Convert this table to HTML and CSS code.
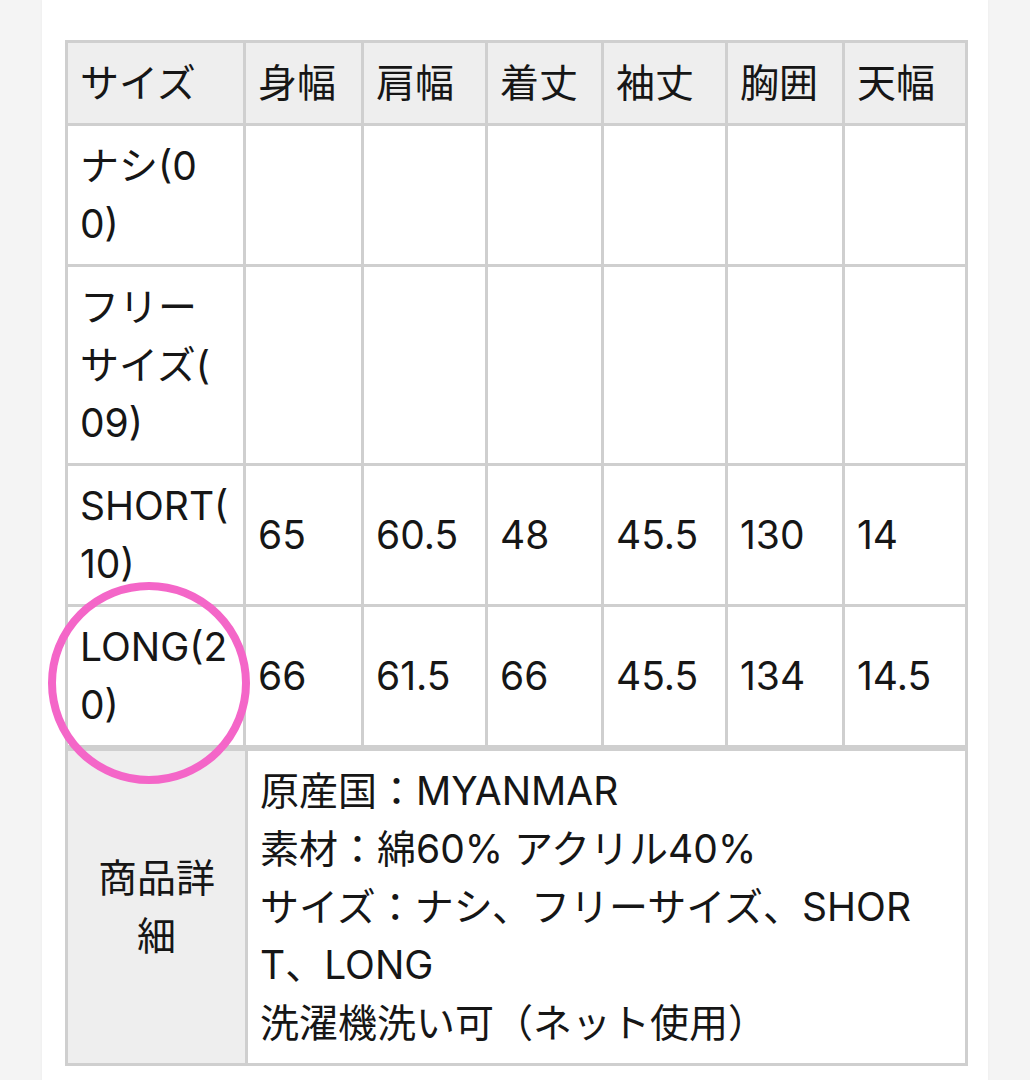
FILE: index.html
```html
<!DOCTYPE html>
<html lang="ja">
<head>
<meta charset="utf-8">
<title>サイズ表</title>
<link rel="stylesheet" href="styles.css">
</head>
<body>
<div class="page">
  <table class="size-table">
    <colgroup>
      <col class="c1"><col class="c2"><col class="c3"><col class="c4"><col class="c5"><col class="c6"><col class="c7">
    </colgroup>
    <thead>
      <tr><th>サイズ</th><th>身幅</th><th>肩幅</th><th>着丈</th><th>袖丈</th><th>胸囲</th><th>天幅</th></tr>
    </thead>
    <tbody>
      <tr><td>ナシ(00)</td><td></td><td></td><td></td><td></td><td></td><td></td></tr>
      <tr><td>フリーサイズ(<wbr>09)</td><td></td><td></td><td></td><td></td><td></td><td></td></tr>
      <tr><td>SHORT(<wbr>10)</td><td>65</td><td>60.5</td><td>48</td><td>45.5</td><td>130</td><td>14</td></tr>
      <tr><td>LONG(20)</td><td>66</td><td>61.5</td><td>66</td><td>45.5</td><td>134</td><td>14.5</td></tr>
    </tbody>
  </table>
  <table class="detail-table">
    <colgroup><col class="d1"><col class="d2"></colgroup>
    <tbody>
      <tr>
        <th>商品詳細</th>
        <td>原産国：MYANMAR<br>素材：綿60% アクリル40%<br>サイズ：ナシ、フリーサイズ、SHORT、LONG<br>洗濯機洗い可（ネット使用）</td>
      </tr>
    </tbody>
  </table>
  <div class="mark"></div>
</div>
</body>
</html>
```

FILE: styles.css
```css
html, body {
  margin: 0;
  padding: 0;
}
body {
  background: #f4f4f4;
  font-family: "Inter", "Noto Sans CJK JP", sans-serif;
  color: #161616;
}
.page {
  position: relative;
  background: #fff;
  margin: 0 42px;
  padding: 40px 22px 20px 23px;
  min-height: 1020px;
  box-shadow: 0 0 3px rgba(0, 0, 0, 0.04);
}
table {
  border-collapse: collapse;
  table-layout: fixed;
  width: 900px;
  font-size: 39px;
  line-height: 58px;
}
th, td {
  border: 3px solid #cfcfcf;
  padding: 11px 12px;
  text-align: left;
  font-weight: normal;
  vertical-align: middle;
  word-break: break-all;
}
thead th {
  background: #eeeeee;
}
.c1 { width: 178px; }
.c2 { width: 118px; }
.c3 { width: 124px; }
.c4 { width: 116px; }
.c5 { width: 124px; }
.c6 { width: 117px; }
.c7 { width: 123px; }
.detail-table .d1 { width: 180px; }
.detail-table .d2 { width: 720px; }
.detail-table th {
  background: #eeeeee;
  text-align: center;
}
.mark {
  position: absolute;
  left: 6px;
  top: 582px;
  width: 186px;
  height: 186px;
  border: 8px solid #f466c8;
  border-radius: 50%;
}
```
